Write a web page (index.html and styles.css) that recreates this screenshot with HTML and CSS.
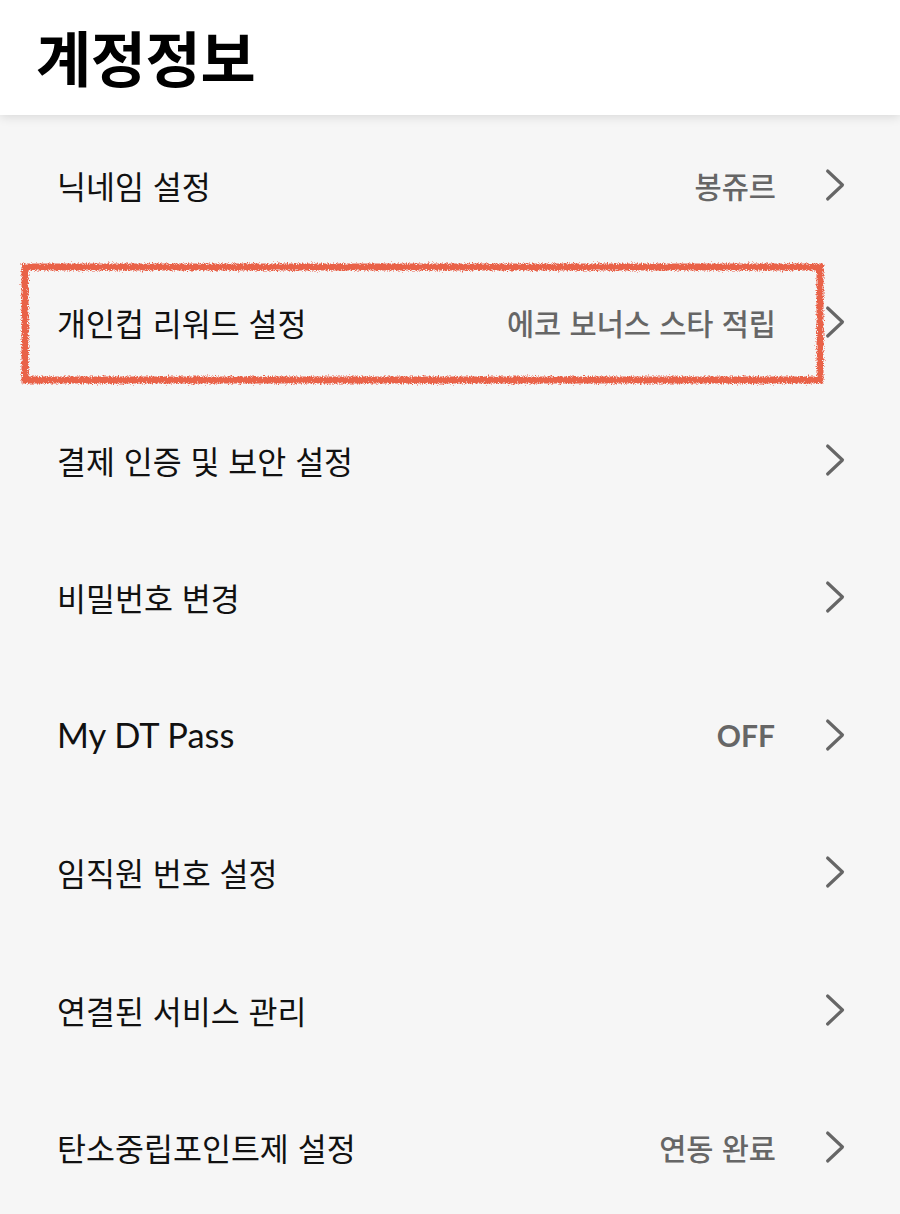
FILE: index.html
```html
<!DOCTYPE html>
<html lang="ko">
<head>
    <meta charset="UTF-8">
    <meta name="viewport" content="width=device-width, initial-scale=1.0">
    <title>계정정보</title>
    <link rel="stylesheet" href="styles.css">
</head>
<body>

    <svg class="defs" width="0" height="0">
        <filter id="rough" x="-5%" y="-20%" width="110%" height="140%">
            <feTurbulence type="fractalNoise" baseFrequency="0.8" numOctaves="3" result="noise"/>
            <feDisplacementMap in="SourceGraphic" in2="noise" scale="6" result="moved"/>
            <feGaussianBlur in="moved" stdDeviation="0.5"/>
        </filter>
    </svg>

    <header class="top-bar">
        <h1>계정정보</h1>
    </header>

    <ul class="menu">
        <li class="menu-item">
            <span class="label">닉네임 설정</span>
            <span class="value">봉쥬르</span>
            <svg class="chevron" viewBox="0 0 24 38"><polyline points="3,3 20,19 3,35"/></svg>
        </li>
        <li class="menu-item marked">
            <span class="label">개인컵 리워드 설정</span>
            <span class="value">에코 보너스 스타 적립</span>
            <svg class="chevron" viewBox="0 0 24 38"><polyline points="3,3 20,19 3,35"/></svg>
            <svg class="pen-box" viewBox="0 0 803 121" preserveAspectRatio="none">
                <rect x="4" y="4" width="795" height="113"/>
            </svg>
        </li>
        <li class="menu-item">
            <span class="label">결제 인증 및 보안 설정</span>
            <span class="value"></span>
            <svg class="chevron" viewBox="0 0 24 38"><polyline points="3,3 20,19 3,35"/></svg>
        </li>
        <li class="menu-item">
            <span class="label">비밀번호 변경</span>
            <span class="value"></span>
            <svg class="chevron" viewBox="0 0 24 38"><polyline points="3,3 20,19 3,35"/></svg>
        </li>
        <li class="menu-item">
            <span class="label latin">My DT Pass</span>
            <span class="value latin bold">OFF</span>
            <svg class="chevron" viewBox="0 0 24 38"><polyline points="3,3 20,19 3,35"/></svg>
        </li>
        <li class="menu-item">
            <span class="label">임직원 번호 설정</span>
            <span class="value"></span>
            <svg class="chevron" viewBox="0 0 24 38"><polyline points="3,3 20,19 3,35"/></svg>
        </li>
        <li class="menu-item">
            <span class="label">연결된 서비스 관리</span>
            <span class="value"></span>
            <svg class="chevron" viewBox="0 0 24 38"><polyline points="3,3 20,19 3,35"/></svg>
        </li>
        <li class="menu-item">
            <span class="label">탄소중립포인트제 설정</span>
            <span class="value">연동 완료</span>
            <svg class="chevron" viewBox="0 0 24 38"><polyline points="3,3 20,19 3,35"/></svg>
        </li>
    </ul>

</body>
</html>
```

FILE: styles.css
```css
body {
    margin: 0;
    background-color: #f6f6f6;
    font-family: "Noto Sans CJK KR", "Noto Sans", sans-serif;
    color: #111;
    overflow: hidden;
}

.defs {
    position: absolute;
}

.top-bar {
    position: relative;
    z-index: 1;
    height: 115px;
    background-color: #fff;
    box-shadow: 0px 2px 10px rgba(0, 0, 0, 0.12);
    display: flex;
    align-items: center;
    padding-left: 36px;
}

    .top-bar h1 {
        margin: 0 0 4px 0;
        font-size: 60px;
        font-weight: 700;
        color: #000;
        letter-spacing: -0.4px;
    }

.menu {
    list-style: none;
    margin: 0;
    padding: 1px 0 0 0;
}

.menu-item {
    position: relative;
    height: 137.5px;
    display: flex;
    align-items: center;
    padding: 0 54px 0 57px;
}

.label {
    flex: 1;
    font-size: 31.5px;
}

.value {
    font-size: 29.5px;
    font-weight: 500;
    color: #666;
    margin-right: 49px;
}

.latin {
    font-family: Lato, "Noto Sans CJK KR", sans-serif;
    font-size: 34.4px;
}

.value.latin {
    font-size: 30px;
    margin-right: 50px;
}

.bold {
    font-weight: 700;
}

.chevron {
    width: 21px;
    height: 36px;
    fill: none;
    stroke: #666;
    stroke-width: 3.6;
    stroke-linecap: round;
    stroke-linejoin: round;
}

.pen-box {
    position: absolute;
    left: 21px;
    top: 9px;
    width: 803px;
    height: 121px;
    overflow: visible;
    filter: url(#rough);
}

    .pen-box rect {
        fill: none;
        stroke: #e6492c;
        stroke-width: 7;
        opacity: 0.85;
    }
```
